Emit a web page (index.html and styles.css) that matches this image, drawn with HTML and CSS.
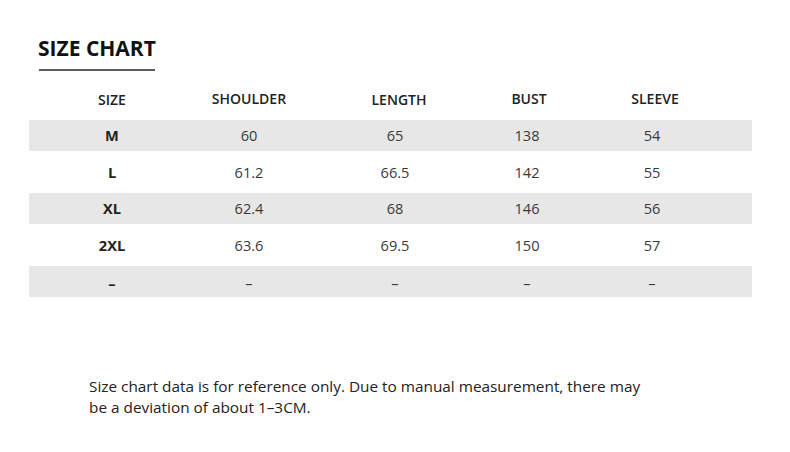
FILE: index.html
```html
<!DOCTYPE html>
<html>
<head>
<meta charset="utf-8">
<link rel="stylesheet" href="styles.css">
</head>
<body>
<div class="page">
  <div class="title-wrap">
    <h1 class="title">SIZE CHART</h1>
    <div class="title-rule"></div>
  </div>
  <div class="chart">
    <div class="row head">
      <div class="c c1">SIZE</div>
      <div class="c c2">SHOULDER</div>
      <div class="c c3">LENGTH</div>
      <div class="c c4">BUST</div>
      <div class="c c5">SLEEVE</div>
    </div>
    <div class="row band">
      <div class="c c1 size">M</div>
      <div class="c c2">60</div>
      <div class="c c3">65</div>
      <div class="c c4">138</div>
      <div class="c c5">54</div>
    </div>
    <div class="row">
      <div class="c c1 size">L</div>
      <div class="c c2">61.2</div>
      <div class="c c3">66.5</div>
      <div class="c c4">142</div>
      <div class="c c5">55</div>
    </div>
    <div class="row band">
      <div class="c c1 size">XL</div>
      <div class="c c2">62.4</div>
      <div class="c c3">68</div>
      <div class="c c4">146</div>
      <div class="c c5">56</div>
    </div>
    <div class="row">
      <div class="c c1 size">2XL</div>
      <div class="c c2">63.6</div>
      <div class="c c3">69.5</div>
      <div class="c c4">150</div>
      <div class="c c5">57</div>
    </div>
    <div class="row band">
      <div class="c c1 size dash">–</div>
      <div class="c c2 dash">–</div>
      <div class="c c3 dash">–</div>
      <div class="c c4 dash">–</div>
      <div class="c c5 dash">–</div>
    </div>
  </div>
  <p class="note">Size chart data is for reference only. Due to manual measurement, there may<br>be a deviation of about 1–3CM.</p>
</div>
</body>
</html>
```

FILE: styles.css
```css
html, body {
  margin: 0;
  padding: 0;
  background: #ffffff;
}
body {
  font-family: "Open Sans", "Noto Sans", sans-serif;
  color: #2a2a2a;
}
.page {
  width: 790px;
  height: 452px;
  padding-top: 36px;
  box-sizing: border-box;
}
.title-wrap {
  margin-left: 39px;
  width: 116px;
}
.title {
  margin: 0;
  font-size: 21px;
  line-height: 24px;
  font-weight: 700;
  color: #111;
  white-space: nowrap;
  margin-left: -1px;
}
.title-rule {
  margin-top: 9px;
  height: 2px;
  background: #5a5a5a;
}
.chart {
  margin-left: 29px;
  width: 723px;
  margin-top: 17px;
  display: flex;
  flex-direction: column;
  gap: 5.5px;
}
.row {
  display: grid;
  grid-template-columns: 166px 108px 184px 80px 170px 15px;
  height: 31px;
  align-items: center;
  font-size: 14.6px;
  color: #3a3a3a;
}
.row.band {
  background: #e7e7e7;
}
.row.head {
  height: 26px;
  box-sizing: border-box;
  padding-bottom: 6px;
  font-weight: 600;
  font-size: 14px;
  color: #222;
}
.c {
  text-align: center;
  white-space: nowrap;
}
.size {
  font-weight: 700;
  color: #222;
}
.dash {
  padding-top: 3px;
}
.head .c1 { padding-top: 2px; }
.head .c3 { padding-left: 8px; padding-top: 1px; }
.head .c4 { padding-left: 4px; }
.head .c5 { padding-left: 6px; }
.note {
  margin: 79px 0 0 89px;
  font-size: 15.35px;
  line-height: 21px;
  color: #222;
}
```
